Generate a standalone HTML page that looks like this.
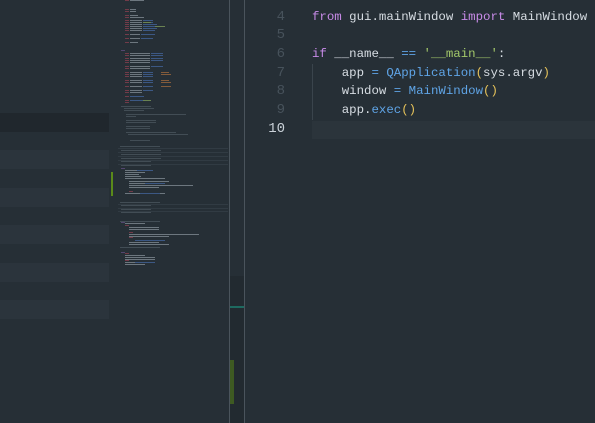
<!DOCTYPE html>
<html><head><style>
html,body{margin:0;padding:0}
body{width:595px;height:423px;background:#262f36;position:relative;overflow:hidden;font-family:"Liberation Mono",monospace}
.s{position:absolute;left:0;width:109px;height:19px}
.ln{position:absolute;left:245px;width:40px;text-align:right;font-size:14px;color:#47525b;line-height:19px}
.code{position:absolute;left:312px;font-size:12.4px;color:#d7dde3;white-space:pre;line-height:19px}
.k{color:#c88be8}.f{color:#5fa4e6}.o{color:#5fa4e6}.st{color:#a3c86a}.p{color:#e5c25a}
</style></head><body>
<div class="s" style="top:113px;background:#20272d"></div>
<div class="s" style="top:150px;background:#2b343c"></div>
<div class="s" style="top:188px;background:#2b343c"></div>
<div class="s" style="top:225px;background:#2b343c"></div>
<div class="s" style="top:263px;background:#2b343c"></div>
<div class="s" style="top:300px;background:#2b343c"></div>
<svg style="position:absolute;left:0;top:0" width="595" height="423">
<rect x="111" y="172" width="2" height="24" fill="#5a8a1a"/>
<line x1="229.5" y1="0" x2="229.5" y2="423" stroke="#4a545c"/>
<line x1="244.5" y1="0" x2="244.5" y2="423" stroke="#4a545c"/>
<rect x="230" y="276" width="14" height="147" fill="#222a30"/>
<rect x="230" y="306" width="14" height="2" fill="#1e6a60"/>
<rect x="230" y="360" width="4" height="44" fill="#3e5a22"/>
<rect x="312" y="121" width="283" height="18" fill="#2b343b"/>
<g opacity="0.55">
<g fill="#b0465a">
<rect x="125" y="0" width="4" height="1"/><rect x="125" y="9" width="4" height="1"/><rect x="125" y="11" width="4" height="1"/>
<rect x="125" y="15" width="4" height="1"/><rect x="125" y="17" width="4" height="1"/>
<rect x="125" y="20" width="4" height="1"/><rect x="125" y="22" width="4" height="1"/><rect x="125" y="24" width="4" height="1"/><rect x="125" y="26" width="4" height="1"/><rect x="125" y="28" width="4" height="1"/><rect x="125" y="30" width="4" height="1"/>
<rect x="125" y="34" width="4" height="1"/><rect x="125" y="38" width="4" height="1"/><rect x="125" y="42" width="4" height="1"/>
<rect x="125" y="53" width="4" height="1"/><rect x="125" y="55" width="4" height="1"/><rect x="125" y="58" width="4" height="1"/><rect x="125" y="60" width="4" height="1"/><rect x="125" y="62" width="4" height="1"/>
<rect x="125" y="66" width="4" height="1"/><rect x="125" y="68" width="4" height="1"/><rect x="125" y="72" width="4" height="1"/><rect x="125" y="74" width="4" height="1"/><rect x="125" y="76" width="4" height="1"/>
<rect x="125" y="80" width="4" height="1"/><rect x="125" y="82" width="4" height="1"/><rect x="125" y="86" width="4" height="1"/><rect x="125" y="90" width="4" height="1"/><rect x="125" y="92" width="4" height="1"/><rect x="125" y="96" width="4" height="1"/><rect x="125" y="100" width="4" height="1"/><rect x="125" y="102" width="4" height="1"/>
<rect x="129" y="191" width="4" height="1"/><rect x="125" y="225" width="4" height="1"/><rect x="129" y="232" width="4" height="1"/><rect x="129" y="237" width="4" height="1"/><rect x="125" y="253" width="4" height="1"/><rect x="125" y="260" width="4" height="1"/>
</g>
<g fill="#a8b2bc">
<rect x="130" y="0" width="14" height="1"/><rect x="130" y="9" width="6" height="1"/><rect x="130" y="11" width="6" height="1"/>
<rect x="130" y="15" width="8" height="1"/><rect x="130" y="17" width="14" height="1"/>
<rect x="130" y="20" width="12" height="1"/><rect x="130" y="22" width="12" height="1"/><rect x="130" y="24" width="12" height="1"/><rect x="130" y="26" width="12" height="1"/><rect x="130" y="28" width="12" height="1"/><rect x="130" y="30" width="12" height="1"/>
<rect x="130" y="34" width="10" height="1"/><rect x="130" y="38" width="10" height="1"/><rect x="130" y="42" width="8" height="1"/>
<rect x="130" y="53" width="20" height="1"/><rect x="130" y="55" width="20" height="1"/><rect x="130" y="58" width="20" height="1"/><rect x="130" y="60" width="20" height="1"/><rect x="130" y="62" width="20" height="1"/>
<rect x="130" y="66" width="20" height="1"/><rect x="130" y="68" width="20" height="1"/><rect x="130" y="72" width="12" height="1"/><rect x="130" y="74" width="12" height="1"/><rect x="130" y="76" width="12" height="1"/>
<rect x="130" y="80" width="12" height="1"/><rect x="130" y="82" width="12" height="1"/><rect x="130" y="86" width="12" height="1"/><rect x="130" y="90" width="12" height="1"/><rect x="130" y="92" width="12" height="1"/>
<rect x="125" y="170" width="20" height="1"/><rect x="125" y="172" width="20" height="1"/><rect x="125" y="174" width="14" height="1"/><rect x="125" y="176" width="16" height="1"/><rect x="125" y="178" width="40" height="1"/><rect x="129" y="181" width="40" height="1"/><rect x="129" y="183" width="30" height="1"/><rect x="129" y="185" width="64" height="1"/><rect x="129" y="187" width="30" height="1"/><rect x="125" y="193" width="40" height="1"/>
<rect x="125" y="223" width="20" height="1"/><rect x="129" y="227" width="30" height="1"/><rect x="129" y="229" width="30" height="1"/><rect x="129" y="234" width="70" height="1"/><rect x="129" y="236" width="40" height="1"/><rect x="129" y="242" width="30" height="1"/><rect x="129" y="244" width="40" height="1"/>
<rect x="125" y="255" width="20" height="1"/><rect x="125" y="257" width="30" height="1"/><rect x="125" y="259" width="30" height="1"/><rect x="125" y="262" width="30" height="1"/><rect x="125" y="264" width="20" height="1"/>
</g>
<g fill="#4f7bc4">
<rect x="143" y="20" width="10" height="1"/><rect x="143" y="22" width="10" height="1"/><rect x="143" y="24" width="14" height="1"/><rect x="143" y="26" width="12" height="1"/><rect x="143" y="28" width="14" height="1"/><rect x="143" y="30" width="12" height="1"/><rect x="141" y="34" width="14" height="1"/><rect x="141" y="38" width="12" height="1"/>
<rect x="151" y="53" width="12" height="1"/><rect x="151" y="55" width="12" height="1"/><rect x="151" y="58" width="12" height="1"/><rect x="151" y="60" width="12" height="1"/><rect x="151" y="66" width="12" height="1"/><rect x="143" y="72" width="10" height="1"/><rect x="143" y="74" width="10" height="1"/><rect x="143" y="76" width="10" height="1"/><rect x="143" y="80" width="10" height="1"/><rect x="143" y="82" width="10" height="1"/><rect x="143" y="86" width="10" height="1"/><rect x="143" y="90" width="10" height="1"/><rect x="130" y="96" width="14" height="1"/><rect x="130" y="100" width="20" height="1"/>
<rect x="137" y="170" width="16" height="1"/><rect x="145" y="183" width="20" height="1"/><rect x="140" y="193" width="20" height="1"/><rect x="135" y="240" width="30" height="1"/><rect x="135" y="262" width="20" height="1"/>
</g>
<g fill="#a3c86a"><rect x="143" y="22" width="8" height="1"/><rect x="155" y="26" width="10" height="1"/><rect x="143" y="100" width="8" height="1"/></g>
<g fill="#d08040"><rect x="161" y="72" width="8" height="1"/><rect x="161" y="74" width="10" height="1"/><rect x="161" y="80" width="8" height="1"/><rect x="161" y="82" width="10" height="1"/><rect x="161" y="86" width="10" height="1"/></g>
<g fill="#7a5aa0"><rect x="121" y="50" width="4" height="1"/><rect x="121" y="168" width="4" height="1"/><rect x="121" y="222" width="4" height="1"/><rect x="121" y="252" width="4" height="1"/></g>
<g fill="#5a6670">
<rect x="121" y="106" width="30" height="1"/><rect x="124" y="108" width="30" height="1"/><rect x="124" y="110" width="20" height="1"/><rect x="126" y="114" width="60" height="1"/><rect x="126" y="116" width="10" height="1"/><rect x="126" y="120" width="30" height="1"/><rect x="126" y="122" width="30" height="1"/><rect x="126" y="126" width="24" height="1"/><rect x="126" y="128" width="24" height="1"/><rect x="126" y="132" width="50" height="1"/><rect x="128" y="134" width="60" height="1"/><rect x="130" y="140" width="20" height="1"/>
<rect x="120" y="146" width="40" height="1"/><rect x="121" y="150" width="40" height="1"/><rect x="121" y="154" width="40" height="1"/><rect x="121" y="158" width="40" height="1"/><rect x="121" y="161" width="30" height="1"/><rect x="121" y="165" width="30" height="1"/>
<rect x="120" y="202" width="40" height="1"/><rect x="121" y="205" width="30" height="1"/><rect x="121" y="209" width="30" height="1"/><rect x="121" y="212" width="30" height="1"/><rect x="120" y="221" width="40" height="1"/><rect x="120" y="247" width="40" height="1"/>
</g>
<g fill="#3a454e">
<rect x="118" y="148" width="110" height="1"/><rect x="118" y="152" width="110" height="1"/><rect x="118" y="156" width="110" height="1"/><rect x="118" y="160" width="110" height="1"/><rect x="118" y="164" width="110" height="1"/>
<rect x="118" y="204" width="110" height="1"/><rect x="118" y="208" width="110" height="1"/><rect x="118" y="211" width="110" height="1"/>
</g>
</g>
</svg>
<div class="ln" style="top:8px">4</div>
<div class="ln" style="top:26px">5</div>
<div class="ln" style="top:45px">6</div>
<div class="ln" style="top:64px">7</div>
<div class="ln" style="top:82px">8</div>
<div class="ln" style="top:101px">9</div>
<div class="ln" style="top:120px;color:#c9d1d8">10</div>
<div style="position:absolute;left:312px;top:64px;width:1px;height:56px;background:#3a444c"></div>
<div class="code" style="top:8px"><span class="k">from</span> gui.mainWindow <span class="k">import</span> MainWindow</div>
<div class="code" style="top:45px"><span class="k">if</span> __name__ <span class="o">==</span> <span class="st">'__main__'</span>:</div>
<div class="code" style="top:64px">    app <span class="o">=</span> <span class="f">QApplication</span><span class="p">(</span>sys.argv<span class="p">)</span></div>
<div class="code" style="top:82px">    window <span class="o">=</span> <span class="f">MainWindow</span><span class="p">()</span></div>
<div class="code" style="top:101px">    app.<span class="f">exec</span><span class="p">()</span></div>
</body></html>
